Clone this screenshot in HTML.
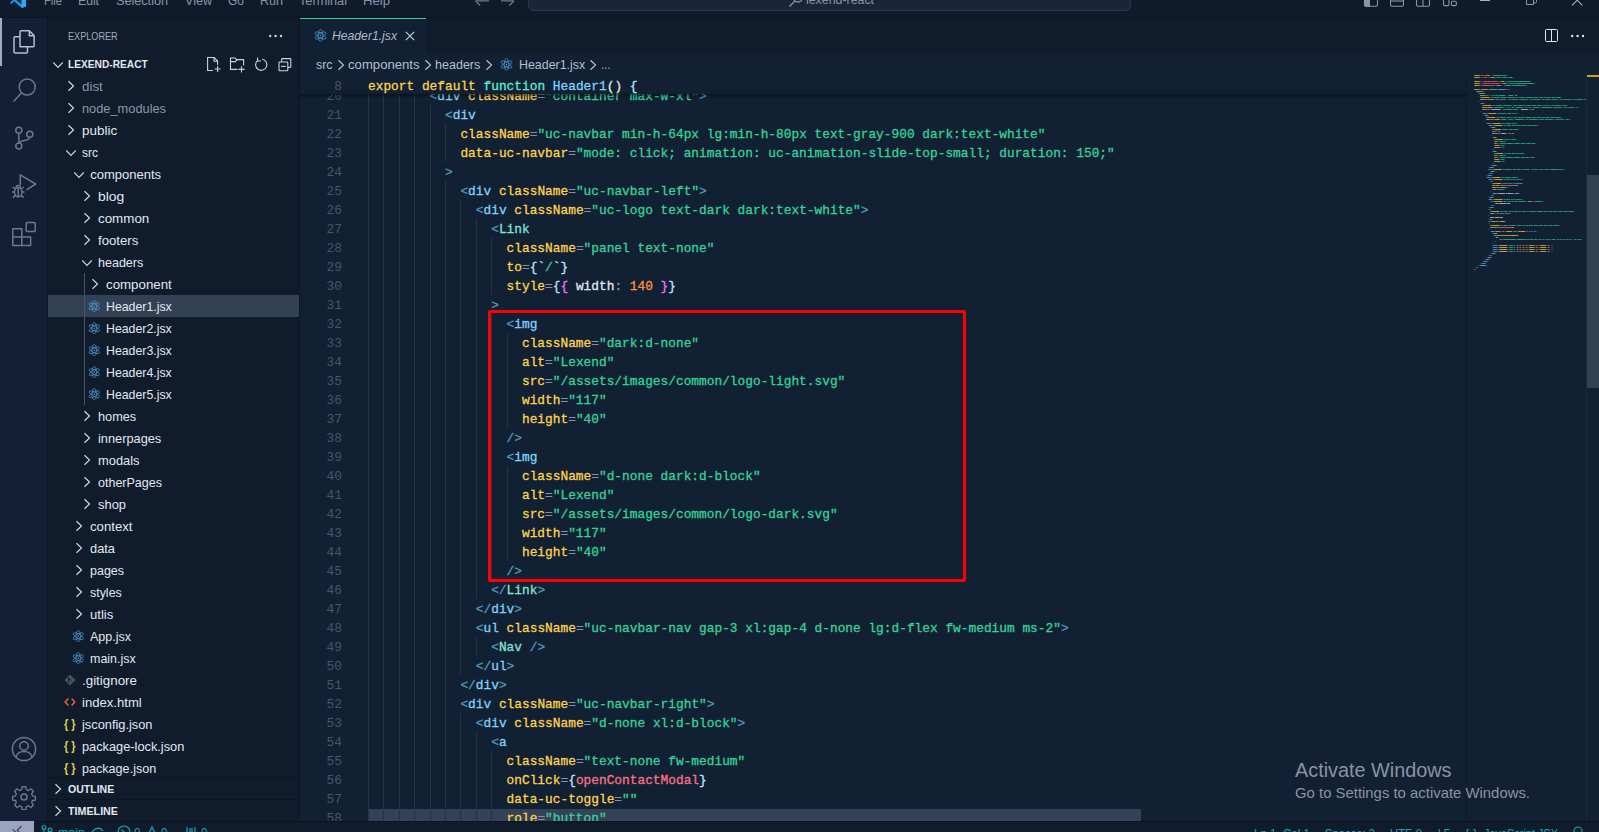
<!DOCTYPE html>
<html><head><meta charset="utf-8"><title>Header1.jsx - lexend-react</title>
<style>
*{box-sizing:border-box}
html,body{margin:0;padding:0}
body{width:1599px;height:832px;overflow:hidden;position:relative;background:#122033;font-family:"Liberation Sans",sans-serif;color:#e2e8f0}
.abs,.t,svg.i{position:absolute}
.t{white-space:pre;transform-origin:0 50%;display:block}
.code{position:absolute;left:368px;white-space:pre;font:12.83px/19px "Liberation Mono",monospace;height:19px;color:#e2e8f0;-webkit-text-stroke:.3px}
.ln{position:absolute;left:300px;width:42px;text-align:right;font:12.83px/19px "Liberation Mono",monospace;color:#475569;height:19px}
.mm{white-space:pre;font:bold 2.4px/2px "Liberation Mono",monospace;letter-spacing:-0.44px}
.g{position:absolute;width:1px;background:#243347}
.a{color:#fcd34d}.s{color:#34d399}.p{color:#4f9bb8}.tg{color:#7dd3fc}.cp{color:#84e1d4}.e{color:#8492a6}.b1{color:#bae6fd}.b2{color:#e879f9}.n{color:#fb923c}.v{color:#fb7185}.w{color:#e2e8f0}.k{color:#fcd34d}.f{color:#5eead4}
#root{position:absolute;left:0;top:0;width:1599px;height:832px;overflow:hidden;background:#122033}
html{overflow:hidden;width:1599px;height:832px}
</style></head><body><div id="root">

<div class="abs" style="left:0;top:0;width:1599px;height:18px;background:#0f1a2b;border-bottom:1px solid #0c1422"></div>
<svg class="i" style="left:0;top:0" width="40" height="12" viewBox="0 0 40 12"><path d="M10 2.6 L13 0 L16.2 0 L21.6 4.4 L21.6 0 L26 0 L26 6.2 L21.8 7.9 L14.3 1.2 L11.3 3.9 Z" fill="#1b9cf0"/><path d="M21.6 0 H26 V6.2 L21.8 7.9 Z" fill="#2aabf7"/></svg>
<span class="t" style="left:44px;top:-8.5px;font:normal 400 13px/18px 'Liberation Sans',sans-serif;color:#8a95a8;transform:scaleX(0.8591);">File</span>
<span class="t" style="left:78px;top:-8.5px;font:normal 400 13px/18px 'Liberation Sans',sans-serif;color:#8a95a8;transform:scaleX(0.9372);">Edit</span>
<span class="t" style="left:116px;top:-8.5px;font:normal 400 13px/18px 'Liberation Sans',sans-serif;color:#8a95a8;transform:scaleX(0.9722);">Selection</span>
<span class="t" style="left:185px;top:-8.5px;font:normal 400 13px/18px 'Liberation Sans',sans-serif;color:#8a95a8;transform:scaleX(0.9659);">View</span>
<span class="t" style="left:228px;top:-8.5px;font:normal 400 13px/18px 'Liberation Sans',sans-serif;color:#8a95a8;transform:scaleX(0.9225);">Go</span>
<span class="t" style="left:260px;top:-8.5px;font:normal 400 13px/18px 'Liberation Sans',sans-serif;color:#8a95a8;transform:scaleX(0.9640);">Run</span>
<span class="t" style="left:299px;top:-8.5px;font:normal 400 13px/18px 'Liberation Sans',sans-serif;color:#8a95a8;transform:scaleX(0.9771);">Terminal</span>
<span class="t" style="left:363px;top:-8.5px;font:normal 400 13px/18px 'Liberation Sans',sans-serif;color:#8a95a8;transform:scaleX(1.0093);">Help</span>
<svg class="i" style="left:470px;top:0" width="50" height="8" viewBox="0 0 50 8" fill="none" stroke="#6f7b8e" stroke-width="1.2"><path d="M5.5 .8 H19 M5.5 .8 L10.2 5.5"/><path d="M44 .8 H31 M44 .8 L39.3 5.5"/></svg>
<div class="abs" style="left:528px;top:-13px;width:603px;height:24px;background:#1a2638;border:1px solid #2c394c;border-radius:6px"></div>
<svg class="i" style="left:788px;top:-7px" width="16" height="16" viewBox="0 0 16 16" fill="none" stroke="#8a95a8" stroke-width="1.3"><path d="M1.5 13.5 L7 8"/><circle cx="10" cy="4.6" r="4.4"/></svg>
<span class="t" style="left:806px;top:-8px;font:normal 400 12px/17px 'Liberation Sans',sans-serif;color:#8a95a8;transform:scaleX(1.0296);">lexend-react</span>
<svg class="i" style="left:1360px;top:0" width="100" height="9" viewBox="0 0 100 9" fill="none" stroke="#8a95a8" stroke-width="1.1"><rect x="4.5" y="-8" width="13" height="14.3" rx="1.5"/><path d="M4.5 -2 H9.5 V6.3 H6 a1.5 1.5 0 0 1 -1.5 -1.5Z" fill="#8a95a8"/><rect x="30.5" y="-8" width="13" height="14.3" rx="1.5"/><path d="M30.5 1 H43.5"/><rect x="56.5" y="-8" width="13" height="14.3" rx="1.5"/><path d="M63 -2 V6.3"/><rect x="83.5" y="-8" width="5.5" height="13.6" rx="1"/><rect x="91.5" y="1.2" width="4.8" height="4.4" rx="1"/></svg>
<div class="abs" style="left:1480px;top:0;width:10px;height:1px;background:#aab3c2"></div>
<svg class="i" style="left:1520px;top:0" width="20" height="8" viewBox="0 0 20 8" fill="none" stroke="#8a95a8" stroke-width="1"><path d="M6.5 -2 V4.5 H13.5 V-2"/><path d="M13.5 2.8 H15.5 a1 1 0 0 0 1 -1 V-2"/></svg>
<svg class="i" style="left:1568px;top:0" width="20" height="8" viewBox="0 0 20 8" fill="none" stroke="#aab3c2" stroke-width="1.1"><path d="M4 5.3 L9.2 .2 L14.4 5.3"/></svg>
<div class="abs" style="left:0;top:18px;width:48px;height:803px;background:#121f34;border-right:1px solid #0d1626"></div>
<div class="abs" style="left:0;top:18px;width:2px;height:48px;background:#a5abc4"></div>
<svg class="i" style="left:0;top:18px" width="48" height="48" viewBox="0 18 48 48" fill="none" stroke="#b6bbd2" stroke-width="1.5" stroke-linejoin="round"><path d="M20 46.7 V31.8 a1 1 0 0 1 1 -1 H29.3 L34.1 35.6 V45.7 a1 1 0 0 1 -1 1 Z"/><path d="M29.3 31 V35.7 H34"/><path d="M19.8 36.8 H15 a1 1 0 0 0 -1 1 V52 a1 1 0 0 0 1 1 H26.5 a1 1 0 0 0 1 -1 V47"/></svg>
<svg class="i" style="left:12px;top:76px" width="26" height="28" viewBox="0 0 26 28" fill="none" stroke="#6c788c" stroke-width="1.5"><circle cx="15.2" cy="11" r="8"/><path d="M9.6 16.8 L1.6 25.4"/></svg>
<svg class="i" style="left:12px;top:124px" width="24" height="28" viewBox="0 0 24 28" fill="none" stroke="#6c788c" stroke-width="1.5"><circle cx="6.8" cy="6.3" r="3"/><circle cx="6.8" cy="22" r="3"/><circle cx="17.8" cy="10.3" r="3"/><path d="M6.8 9.3 V19 M17.8 13.3 C17.8 17.5 8.5 15.5 7 19"/></svg>
<svg class="i" style="left:11px;top:172px" width="27" height="28" viewBox="0 0 27 28" fill="none" stroke="#6c788c" stroke-width="1.5" stroke-linejoin="round"><path d="M9.3 13 V2.8 L24.6 12 L15.5 17.8"/><ellipse cx="7.2" cy="20.2" rx="3.7" ry="4.6"/><path d="M7.2 16 V24.5 M3.5 20 H1 M11 20 H13.5 M4.2 17 L1.8 15 M10.2 17 L12.6 15 M4.2 23.4 L1.8 25.6 M10.2 23.4 L12.6 25.6 M5 15.8 a2.2 2.2 0 0 1 4.4 0"/></svg>
<svg class="i" style="left:11px;top:221px" width="26" height="26" viewBox="0 0 26 26" fill="none" stroke="#6c788c" stroke-width="1.5" stroke-linejoin="round"><path d="M1.8 7.8 H10.8 V24.4 H1.8 Z M10.8 16 H19.6 V24.4 H10.8 M1.8 16 H10.8"/><rect x="15.2" y="1.6" width="9" height="9" rx="1"/></svg>
<svg class="i" style="left:11px;top:736px" width="26" height="26" viewBox="0 0 26 26" fill="none" stroke="#6c788c" stroke-width="1.5"><circle cx="13" cy="13" r="11.6"/><circle cx="13" cy="10" r="4.3"/><path d="M5 21.5 C6 16.5 10 15.6 13 15.6 C16 15.6 20 16.5 21 21.5"/></svg>
<svg class="i" style="left:11px;top:784px" width="26" height="26" viewBox="0 0 26 26" fill="none" stroke="#6c788c" stroke-width="1.5" stroke-linejoin="round"><circle cx="13" cy="13" r="3"/><path d="M11 1.6 h4 l.6 3.3 2.2 .9 2.8 -1.9 2.8 2.8 -1.9 2.8 .9 2.2 3.3 .6 v4 l-3.3 .6 -.9 2.2 1.9 2.8 -2.8 2.8 -2.8 -1.9 -2.2 .9 -.6 3.3 h-4 l-.6 -3.3 -2.2 -.9 -2.8 1.9 -2.8 -2.8 1.9 -2.8 -.9 -2.2 -3.3 -.6 v-4 l3.3 -.6 .9 -2.2 -1.9 -2.8 2.8 -2.8 2.8 1.9 2.2 -.9z" transform="translate(1.3 1.3) scale(0.9)"/></svg>
<div class="abs" style="left:48px;top:18px;width:252px;height:803px;background:#101b2b;border-right:1px solid #0d1626"></div>
<span class="t" style="left:68px;top:28.5px;font:normal 400 11px/15px 'Liberation Sans',sans-serif;color:#a3adbd;transform:scaleX(0.8294);">EXPLORER</span>
<svg class="i" style="left:268px;top:34px" width="16" height="4" viewBox="0 0 16 4" fill="#cbd5e1"><circle cx="2.2" cy="2" r="1.2"/><circle cx="7.6" cy="2" r="1.2"/><circle cx="13" cy="2" r="1.2"/></svg>
<svg class="i" style="left:52px;top:60.5px" width="12" height="8" viewBox="0 0 12 8" fill="none" stroke="#cbd5e1" stroke-width="1.2"><path d="M1.3 1.5 L6 6.4 L10.7 1.5"/></svg>
<span class="t" style="left:67.8px;top:56.5px;font:normal 700 11px/15px 'Liberation Sans',sans-serif;color:#e2e8f0;transform:scaleX(0.9249);">LEXEND-REACT</span>
<svg class="i" style="left:206px;top:56px" width="16" height="17" viewBox="0 0 16 17" fill="none" stroke="#cbd5e1" stroke-width="1.1"><path d="M7 14.5 H1.6 V1.5 H8.2 L11.6 5 V9"/><path d="M8 1.6 V5.2 H11.5"/><path d="M8.6 13 H14.6 M11.6 10 V16"/></svg>
<svg class="i" style="left:229px;top:56px" width="17" height="17" viewBox="0 0 17 17" fill="none" stroke="#cbd5e1" stroke-width="1.1"><path d="M8.5 13.4 H1.5 V2 H6.2 L7.6 3.6 H14.6 V9.4"/><path d="M1.5 5.6 H6.4 L7.8 3.8"/><path d="M9.4 13.4 H15.6 M12.5 10.3 V16.5"/></svg>
<svg class="i" style="left:254px;top:57px" width="14" height="15" viewBox="0 0 14 15" fill="none" stroke="#cbd5e1" stroke-width="1.1"><path d="M3.4 3.6 A5.6 5.6 0 1 0 8.2 2.2"/><path d="M3.6 0.6 V4 H7"/></svg>
<svg class="i" style="left:278px;top:58px" width="14" height="14" viewBox="0 0 14 14" fill="none" stroke="#cbd5e1" stroke-width="1.1"><path d="M3.6 3.8 V1.4 a.8 .8 0 0 1 .8 -.8 H12 a.8 .8 0 0 1 .8 .8 V8.6 a.8 .8 0 0 1 -.8 .8 H10"/><rect x="1" y="4" width="8.8" height="8.8" rx=".8"/><path d="M3 8.4 H7.8"/></svg>
<svg class="i" style="left:67px;top:80px" width="8" height="12" viewBox="0 0 8 12" fill="none" stroke="#cbd5e1" stroke-width="1.2"><path d="M1.5 1.3 L6.5 6 L1.5 10.7"/></svg>
<span class="t" style="left:82px;top:78px;font:normal 400 13px/18px 'Liberation Sans',sans-serif;color:#8b97a9;transform:scaleX(1.0280);">dist</span>
<svg class="i" style="left:67px;top:102px" width="8" height="12" viewBox="0 0 8 12" fill="none" stroke="#cbd5e1" stroke-width="1.2"><path d="M1.5 1.3 L6.5 6 L1.5 10.7"/></svg>
<span class="t" style="left:82px;top:100px;font:normal 400 13px/18px 'Liberation Sans',sans-serif;color:#8b97a9;transform:scaleX(0.9848);">node_modules</span>
<svg class="i" style="left:67px;top:124px" width="8" height="12" viewBox="0 0 8 12" fill="none" stroke="#cbd5e1" stroke-width="1.2"><path d="M1.5 1.3 L6.5 6 L1.5 10.7"/></svg>
<span class="t" style="left:82px;top:122px;font:normal 400 13px/18px 'Liberation Sans',sans-serif;color:#e2e8f0;transform:scaleX(1.0333);">public</span>
<svg class="i" style="left:64.5px;top:148.5px" width="12" height="8" viewBox="0 0 12 8" fill="none" stroke="#cbd5e1" stroke-width="1.2"><path d="M1.3 1.5 L6 6.4 L10.7 1.5"/></svg>
<span class="t" style="left:82px;top:144px;font:normal 400 13px/18px 'Liberation Sans',sans-serif;color:#e2e8f0;transform:scaleX(0.9225);">src</span>
<svg class="i" style="left:72.8px;top:170.5px" width="12" height="8" viewBox="0 0 12 8" fill="none" stroke="#cbd5e1" stroke-width="1.2"><path d="M1.3 1.5 L6 6.4 L10.7 1.5"/></svg>
<span class="t" style="left:90.3px;top:166px;font:normal 400 13px/18px 'Liberation Sans',sans-serif;color:#e2e8f0;">components</span>
<svg class="i" style="left:83px;top:190px" width="8" height="12" viewBox="0 0 8 12" fill="none" stroke="#cbd5e1" stroke-width="1.2"><path d="M1.5 1.3 L6.5 6 L1.5 10.7"/></svg>
<span class="t" style="left:98px;top:188px;font:normal 400 13px/18px 'Liberation Sans',sans-serif;color:#e2e8f0;transform:scaleX(1.0680);">blog</span>
<svg class="i" style="left:83px;top:212px" width="8" height="12" viewBox="0 0 8 12" fill="none" stroke="#cbd5e1" stroke-width="1.2"><path d="M1.5 1.3 L6.5 6 L1.5 10.7"/></svg>
<span class="t" style="left:98px;top:210px;font:normal 400 13px/18px 'Liberation Sans',sans-serif;color:#e2e8f0;transform:scaleX(1.0279);">common</span>
<svg class="i" style="left:83px;top:234px" width="8" height="12" viewBox="0 0 8 12" fill="none" stroke="#cbd5e1" stroke-width="1.2"><path d="M1.5 1.3 L6.5 6 L1.5 10.7"/></svg>
<span class="t" style="left:98px;top:232px;font:normal 400 13px/18px 'Liberation Sans',sans-serif;color:#e2e8f0;transform:scaleX(1.0126);">footers</span>
<svg class="i" style="left:80.5px;top:258.5px" width="12" height="8" viewBox="0 0 12 8" fill="none" stroke="#cbd5e1" stroke-width="1.2"><path d="M1.3 1.5 L6 6.4 L10.7 1.5"/></svg>
<span class="t" style="left:98px;top:254px;font:normal 400 13px/18px 'Liberation Sans',sans-serif;color:#e2e8f0;transform:scaleX(0.9631);">headers</span>
<svg class="i" style="left:91.25px;top:278px" width="8" height="12" viewBox="0 0 8 12" fill="none" stroke="#cbd5e1" stroke-width="1.2"><path d="M1.5 1.3 L6.5 6 L1.5 10.7"/></svg>
<span class="t" style="left:106.25px;top:276px;font:normal 400 13px/18px 'Liberation Sans',sans-serif;color:#e2e8f0;transform:scaleX(1.0221);">component</span>
<div class="abs" style="left:48px;top:295px;width:251px;height:22px;background:#334155"></div>
<svg class="i" style="left:88px;top:299.75px" width="12.5" height="12.5" viewBox="-10 -10 20 20" fill="none" stroke="#4da3dc" stroke-width="1.05"><ellipse rx="3.5" ry="9.2"/><ellipse rx="9.2" ry="3.5" transform="rotate(30)"/><ellipse rx="9.2" ry="3.5" transform="rotate(-30)"/><circle r="1.2" fill="#4da3dc" stroke="none"/></svg>
<span class="t" style="left:106.25px;top:298px;font:normal 400 13px/18px 'Liberation Sans',sans-serif;color:#e2e8f0;transform:scaleX(0.9477);">Header1.jsx</span>
<svg class="i" style="left:88px;top:321.75px" width="12.5" height="12.5" viewBox="-10 -10 20 20" fill="none" stroke="#4da3dc" stroke-width="1.05"><ellipse rx="3.5" ry="9.2"/><ellipse rx="9.2" ry="3.5" transform="rotate(30)"/><ellipse rx="9.2" ry="3.5" transform="rotate(-30)"/><circle r="1.2" fill="#4da3dc" stroke="none"/></svg>
<span class="t" style="left:106.25px;top:320px;font:normal 400 13px/18px 'Liberation Sans',sans-serif;color:#e2e8f0;transform:scaleX(0.9477);">Header2.jsx</span>
<svg class="i" style="left:88px;top:343.75px" width="12.5" height="12.5" viewBox="-10 -10 20 20" fill="none" stroke="#4da3dc" stroke-width="1.05"><ellipse rx="3.5" ry="9.2"/><ellipse rx="9.2" ry="3.5" transform="rotate(30)"/><ellipse rx="9.2" ry="3.5" transform="rotate(-30)"/><circle r="1.2" fill="#4da3dc" stroke="none"/></svg>
<span class="t" style="left:106.25px;top:342px;font:normal 400 13px/18px 'Liberation Sans',sans-serif;color:#e2e8f0;transform:scaleX(0.9477);">Header3.jsx</span>
<svg class="i" style="left:88px;top:365.75px" width="12.5" height="12.5" viewBox="-10 -10 20 20" fill="none" stroke="#4da3dc" stroke-width="1.05"><ellipse rx="3.5" ry="9.2"/><ellipse rx="9.2" ry="3.5" transform="rotate(30)"/><ellipse rx="9.2" ry="3.5" transform="rotate(-30)"/><circle r="1.2" fill="#4da3dc" stroke="none"/></svg>
<span class="t" style="left:106.25px;top:364px;font:normal 400 13px/18px 'Liberation Sans',sans-serif;color:#e2e8f0;transform:scaleX(0.9477);">Header4.jsx</span>
<svg class="i" style="left:88px;top:387.75px" width="12.5" height="12.5" viewBox="-10 -10 20 20" fill="none" stroke="#4da3dc" stroke-width="1.05"><ellipse rx="3.5" ry="9.2"/><ellipse rx="9.2" ry="3.5" transform="rotate(30)"/><ellipse rx="9.2" ry="3.5" transform="rotate(-30)"/><circle r="1.2" fill="#4da3dc" stroke="none"/></svg>
<span class="t" style="left:106.25px;top:386px;font:normal 400 13px/18px 'Liberation Sans',sans-serif;color:#e2e8f0;transform:scaleX(0.9477);">Header5.jsx</span>
<svg class="i" style="left:83px;top:410px" width="8" height="12" viewBox="0 0 8 12" fill="none" stroke="#cbd5e1" stroke-width="1.2"><path d="M1.5 1.3 L6.5 6 L1.5 10.7"/></svg>
<span class="t" style="left:98px;top:408px;font:normal 400 13px/18px 'Liberation Sans',sans-serif;color:#e2e8f0;transform:scaleX(0.9800);">homes</span>
<svg class="i" style="left:83px;top:432px" width="8" height="12" viewBox="0 0 8 12" fill="none" stroke="#cbd5e1" stroke-width="1.2"><path d="M1.5 1.3 L6.5 6 L1.5 10.7"/></svg>
<span class="t" style="left:98px;top:430px;font:normal 400 13px/18px 'Liberation Sans',sans-serif;color:#e2e8f0;transform:scaleX(0.9832);">innerpages</span>
<svg class="i" style="left:83px;top:454px" width="8" height="12" viewBox="0 0 8 12" fill="none" stroke="#cbd5e1" stroke-width="1.2"><path d="M1.5 1.3 L6.5 6 L1.5 10.7"/></svg>
<span class="t" style="left:98px;top:452px;font:normal 400 13px/18px 'Liberation Sans',sans-serif;color:#e2e8f0;transform:scaleX(0.9899);">modals</span>
<svg class="i" style="left:83px;top:476px" width="8" height="12" viewBox="0 0 8 12" fill="none" stroke="#cbd5e1" stroke-width="1.2"><path d="M1.5 1.3 L6.5 6 L1.5 10.7"/></svg>
<span class="t" style="left:98px;top:474px;font:normal 400 13px/18px 'Liberation Sans',sans-serif;color:#e2e8f0;transform:scaleX(0.9624);">otherPages</span>
<svg class="i" style="left:83px;top:498px" width="8" height="12" viewBox="0 0 8 12" fill="none" stroke="#cbd5e1" stroke-width="1.2"><path d="M1.5 1.3 L6.5 6 L1.5 10.7"/></svg>
<span class="t" style="left:98px;top:496px;font:normal 400 13px/18px 'Liberation Sans',sans-serif;color:#e2e8f0;transform:scaleX(0.9928);">shop</span>
<svg class="i" style="left:75px;top:520px" width="8" height="12" viewBox="0 0 8 12" fill="none" stroke="#cbd5e1" stroke-width="1.2"><path d="M1.5 1.3 L6.5 6 L1.5 10.7"/></svg>
<span class="t" style="left:90px;top:518px;font:normal 400 13px/18px 'Liberation Sans',sans-serif;color:#e2e8f0;transform:scaleX(1.0138);">context</span>
<svg class="i" style="left:75px;top:542px" width="8" height="12" viewBox="0 0 8 12" fill="none" stroke="#cbd5e1" stroke-width="1.2"><path d="M1.5 1.3 L6.5 6 L1.5 10.7"/></svg>
<span class="t" style="left:90px;top:540px;font:normal 400 13px/18px 'Liberation Sans',sans-serif;color:#e2e8f0;transform:scaleX(0.9877);">data</span>
<svg class="i" style="left:75px;top:564px" width="8" height="12" viewBox="0 0 8 12" fill="none" stroke="#cbd5e1" stroke-width="1.2"><path d="M1.5 1.3 L6.5 6 L1.5 10.7"/></svg>
<span class="t" style="left:90px;top:562px;font:normal 400 13px/18px 'Liberation Sans',sans-serif;color:#e2e8f0;transform:scaleX(0.9599);">pages</span>
<svg class="i" style="left:75px;top:586px" width="8" height="12" viewBox="0 0 8 12" fill="none" stroke="#cbd5e1" stroke-width="1.2"><path d="M1.5 1.3 L6.5 6 L1.5 10.7"/></svg>
<span class="t" style="left:90px;top:584px;font:normal 400 13px/18px 'Liberation Sans',sans-serif;color:#e2e8f0;transform:scaleX(0.9553);">styles</span>
<svg class="i" style="left:75px;top:608px" width="8" height="12" viewBox="0 0 8 12" fill="none" stroke="#cbd5e1" stroke-width="1.2"><path d="M1.5 1.3 L6.5 6 L1.5 10.7"/></svg>
<span class="t" style="left:90px;top:606px;font:normal 400 13px/18px 'Liberation Sans',sans-serif;color:#e2e8f0;transform:scaleX(1.0076);">utlis</span>
<svg class="i" style="left:71.75px;top:629.75px" width="12.5" height="12.5" viewBox="-10 -10 20 20" fill="none" stroke="#4da3dc" stroke-width="1.05"><ellipse rx="3.5" ry="9.2"/><ellipse rx="9.2" ry="3.5" transform="rotate(30)"/><ellipse rx="9.2" ry="3.5" transform="rotate(-30)"/><circle r="1.2" fill="#4da3dc" stroke="none"/></svg>
<span class="t" style="left:90px;top:628px;font:normal 400 13px/18px 'Liberation Sans',sans-serif;color:#e2e8f0;transform:scaleX(0.9615);">App.jsx</span>
<svg class="i" style="left:71.75px;top:651.75px" width="12.5" height="12.5" viewBox="-10 -10 20 20" fill="none" stroke="#4da3dc" stroke-width="1.05"><ellipse rx="3.5" ry="9.2"/><ellipse rx="9.2" ry="3.5" transform="rotate(30)"/><ellipse rx="9.2" ry="3.5" transform="rotate(-30)"/><circle r="1.2" fill="#4da3dc" stroke="none"/></svg>
<span class="t" style="left:90px;top:650px;font:normal 400 13px/18px 'Liberation Sans',sans-serif;color:#e2e8f0;transform:scaleX(0.9594);">main.jsx</span>
<svg class="i" style="left:64px;top:674px" width="12" height="12" viewBox="0 0 12 12"><path d="M6 .4 L11.6 6 L6 11.6 L.4 6Z" fill="#46525f"/><path d="M4.6 3.4 V8.6 M4.6 4.6 L7.6 6.6" stroke="#101b2d" stroke-width="1" fill="none"/></svg>
<span class="t" style="left:82px;top:672px;font:normal 400 13px/18px 'Liberation Sans',sans-serif;color:#e2e8f0;transform:scaleX(1.0283);">.gitignore</span>
<svg class="i" style="left:64px;top:697px" width="12" height="10" viewBox="0 0 12 10" fill="none" stroke="#e8642c" stroke-width="1.5"><path d="M4.4 1.4 L1.2 5 L4.4 8.6 M7.6 1.4 L10.8 5 L7.6 8.6"/></svg>
<span class="t" style="left:82px;top:694px;font:normal 400 13px/18px 'Liberation Sans',sans-serif;color:#e2e8f0;transform:scaleX(1.0084);">index.html</span>
<span class="t" style="left:64px;top:715.5px;font:normal 700 12px/17px 'Liberation Sans',sans-serif;color:#e6d04b;transform:scaleX(0.9064);">{ }</span>
<span class="t" style="left:82px;top:716px;font:normal 400 13px/18px 'Liberation Sans',sans-serif;color:#e2e8f0;transform:scaleX(0.9854);">jsconfig.json</span>
<span class="t" style="left:64px;top:737.5px;font:normal 700 12px/17px 'Liberation Sans',sans-serif;color:#e6d04b;transform:scaleX(0.9064);">{ }</span>
<span class="t" style="left:82px;top:738px;font:normal 400 13px/18px 'Liberation Sans',sans-serif;color:#e2e8f0;transform:scaleX(0.9826);">package-lock.json</span>
<span class="t" style="left:64px;top:759.5px;font:normal 700 12px/17px 'Liberation Sans',sans-serif;color:#e6d04b;transform:scaleX(0.9064);">{ }</span>
<span class="t" style="left:82px;top:760px;font:normal 400 13px/18px 'Liberation Sans',sans-serif;color:#e2e8f0;transform:scaleX(0.9690);">package.json</span>
<div class="abs" style="left:84px;top:273px;width:1px;height:132px;background:#46546a"></div>
<div class="abs" style="left:48px;top:777px;width:251px;height:1px;background:#0c1421"></div>
<svg class="i" style="left:54px;top:783px" width="8" height="12" viewBox="0 0 8 12" fill="none" stroke="#cbd5e1" stroke-width="1.2"><path d="M1.5 1.3 L6.5 6 L1.5 10.7"/></svg>
<span class="t" style="left:68px;top:782px;font:normal 700 11px/15px 'Liberation Sans',sans-serif;color:#e2e8f0;transform:scaleX(0.9579);">OUTLINE</span>
<div class="abs" style="left:48px;top:799px;width:251px;height:1px;background:#0c1421"></div>
<svg class="i" style="left:54px;top:805px" width="8" height="12" viewBox="0 0 8 12" fill="none" stroke="#cbd5e1" stroke-width="1.2"><path d="M1.5 1.3 L6.5 6 L1.5 10.7"/></svg>
<span class="t" style="left:68px;top:804px;font:normal 700 11px/15px 'Liberation Sans',sans-serif;color:#e2e8f0;transform:scaleX(0.9738);">TIMELINE</span>
<div class="abs" style="left:300px;top:18px;width:1299px;height:35px;background:#101b2b"></div>
<div class="abs" style="left:300px;top:18px;width:126px;height:35px;background:#122033;border-top:1px solid #34d399"></div>
<svg class="i" style="left:314px;top:29px" width="13" height="13" viewBox="-10 -10 20 20" fill="none" stroke="#4da3dc" stroke-width="1.05"><ellipse rx="3.5" ry="9.2"/><ellipse rx="9.2" ry="3.5" transform="rotate(30)"/><ellipse rx="9.2" ry="3.5" transform="rotate(-30)"/><circle r="1.2" fill="#4da3dc" stroke="none"/></svg>
<span class="t" style="left:332px;top:27px;font:italic 400 13px/18px 'Liberation Sans',sans-serif;color:#aeb8cc;transform:scaleX(0.9369);">Header1.jsx</span>
<svg class="i" style="left:405px;top:31px" width="10" height="10" viewBox="0 0 10 10" stroke="#cbd5e1" stroke-width="1.1"><path d="M.8 .8 L9.2 9.2 M9.2 .8 L.8 9.2"/></svg>
<svg class="i" style="left:1544px;top:28px" width="15" height="15" viewBox="0 0 15 15" fill="none" stroke="#e2e8f0" stroke-width="1"><rect x="1.5" y="1.5" width="12" height="12" rx="1"/><path d="M7.5 1.5 V13.5"/></svg>
<svg class="i" style="left:1570px;top:34px" width="16" height="4" viewBox="0 0 16 4" fill="#e2e8f0"><circle cx="2.2" cy="2" r="1.2"/><circle cx="7.6" cy="2" r="1.2"/><circle cx="13" cy="2" r="1.2"/></svg>
<div class="abs" style="left:368px;top:809px;width:773px;height:12px;background:#344156"></div>
<div class="g" style="left:368.0px;top:86px;height:19px"></div>
<div class="g" style="left:383.4px;top:86px;height:19px"></div>
<div class="g" style="left:398.8px;top:86px;height:19px"></div>
<div class="g" style="left:414.2px;top:86px;height:19px"></div>
<div class="g" style="left:368.0px;top:105px;height:19px"></div>
<div class="g" style="left:383.4px;top:105px;height:19px"></div>
<div class="g" style="left:398.8px;top:105px;height:19px"></div>
<div class="g" style="left:414.2px;top:105px;height:19px"></div>
<div class="g" style="left:429.6px;top:105px;height:19px"></div>
<div class="g" style="left:368.0px;top:124px;height:19px"></div>
<div class="g" style="left:383.4px;top:124px;height:19px"></div>
<div class="g" style="left:398.8px;top:124px;height:19px"></div>
<div class="g" style="left:414.2px;top:124px;height:19px"></div>
<div class="g" style="left:429.6px;top:124px;height:19px"></div>
<div class="g" style="left:445.0px;top:124px;height:19px"></div>
<div class="g" style="left:368.0px;top:143px;height:19px"></div>
<div class="g" style="left:383.4px;top:143px;height:19px"></div>
<div class="g" style="left:398.8px;top:143px;height:19px"></div>
<div class="g" style="left:414.2px;top:143px;height:19px"></div>
<div class="g" style="left:429.6px;top:143px;height:19px"></div>
<div class="g" style="left:445.0px;top:143px;height:19px"></div>
<div class="g" style="left:368.0px;top:162px;height:19px"></div>
<div class="g" style="left:383.4px;top:162px;height:19px"></div>
<div class="g" style="left:398.8px;top:162px;height:19px"></div>
<div class="g" style="left:414.2px;top:162px;height:19px"></div>
<div class="g" style="left:429.6px;top:162px;height:19px"></div>
<div class="g" style="left:368.0px;top:181px;height:19px"></div>
<div class="g" style="left:383.4px;top:181px;height:19px"></div>
<div class="g" style="left:398.8px;top:181px;height:19px"></div>
<div class="g" style="left:414.2px;top:181px;height:19px"></div>
<div class="g" style="left:429.6px;top:181px;height:19px"></div>
<div class="g" style="left:445.0px;top:181px;height:19px"></div>
<div class="g" style="left:368.0px;top:200px;height:19px"></div>
<div class="g" style="left:383.4px;top:200px;height:19px"></div>
<div class="g" style="left:398.8px;top:200px;height:19px"></div>
<div class="g" style="left:414.2px;top:200px;height:19px"></div>
<div class="g" style="left:429.6px;top:200px;height:19px"></div>
<div class="g" style="left:445.0px;top:200px;height:19px"></div>
<div class="g" style="left:460.4px;top:200px;height:19px"></div>
<div class="g" style="left:368.0px;top:219px;height:19px"></div>
<div class="g" style="left:383.4px;top:219px;height:19px"></div>
<div class="g" style="left:398.8px;top:219px;height:19px"></div>
<div class="g" style="left:414.2px;top:219px;height:19px"></div>
<div class="g" style="left:429.6px;top:219px;height:19px"></div>
<div class="g" style="left:445.0px;top:219px;height:19px"></div>
<div class="g" style="left:460.4px;top:219px;height:19px"></div>
<div class="g" style="left:475.8px;top:219px;height:19px"></div>
<div class="g" style="left:368.0px;top:238px;height:19px"></div>
<div class="g" style="left:383.4px;top:238px;height:19px"></div>
<div class="g" style="left:398.8px;top:238px;height:19px"></div>
<div class="g" style="left:414.2px;top:238px;height:19px"></div>
<div class="g" style="left:429.6px;top:238px;height:19px"></div>
<div class="g" style="left:445.0px;top:238px;height:19px"></div>
<div class="g" style="left:460.4px;top:238px;height:19px"></div>
<div class="g" style="left:475.8px;top:238px;height:19px"></div>
<div class="g" style="left:491.2px;top:238px;height:19px"></div>
<div class="g" style="left:368.0px;top:257px;height:19px"></div>
<div class="g" style="left:383.4px;top:257px;height:19px"></div>
<div class="g" style="left:398.8px;top:257px;height:19px"></div>
<div class="g" style="left:414.2px;top:257px;height:19px"></div>
<div class="g" style="left:429.6px;top:257px;height:19px"></div>
<div class="g" style="left:445.0px;top:257px;height:19px"></div>
<div class="g" style="left:460.4px;top:257px;height:19px"></div>
<div class="g" style="left:475.8px;top:257px;height:19px"></div>
<div class="g" style="left:491.2px;top:257px;height:19px"></div>
<div class="g" style="left:368.0px;top:276px;height:19px"></div>
<div class="g" style="left:383.4px;top:276px;height:19px"></div>
<div class="g" style="left:398.8px;top:276px;height:19px"></div>
<div class="g" style="left:414.2px;top:276px;height:19px"></div>
<div class="g" style="left:429.6px;top:276px;height:19px"></div>
<div class="g" style="left:445.0px;top:276px;height:19px"></div>
<div class="g" style="left:460.4px;top:276px;height:19px"></div>
<div class="g" style="left:475.8px;top:276px;height:19px"></div>
<div class="g" style="left:491.2px;top:276px;height:19px"></div>
<div class="g" style="left:368.0px;top:295px;height:19px"></div>
<div class="g" style="left:383.4px;top:295px;height:19px"></div>
<div class="g" style="left:398.8px;top:295px;height:19px"></div>
<div class="g" style="left:414.2px;top:295px;height:19px"></div>
<div class="g" style="left:429.6px;top:295px;height:19px"></div>
<div class="g" style="left:445.0px;top:295px;height:19px"></div>
<div class="g" style="left:460.4px;top:295px;height:19px"></div>
<div class="g" style="left:475.8px;top:295px;height:19px"></div>
<div class="g" style="left:368.0px;top:314px;height:19px"></div>
<div class="g" style="left:383.4px;top:314px;height:19px"></div>
<div class="g" style="left:398.8px;top:314px;height:19px"></div>
<div class="g" style="left:414.2px;top:314px;height:19px"></div>
<div class="g" style="left:429.6px;top:314px;height:19px"></div>
<div class="g" style="left:445.0px;top:314px;height:19px"></div>
<div class="g" style="left:460.4px;top:314px;height:19px"></div>
<div class="g" style="left:475.8px;top:314px;height:19px"></div>
<div class="g" style="left:491.2px;top:314px;height:19px"></div>
<div class="g" style="left:368.0px;top:333px;height:19px"></div>
<div class="g" style="left:383.4px;top:333px;height:19px"></div>
<div class="g" style="left:398.8px;top:333px;height:19px"></div>
<div class="g" style="left:414.2px;top:333px;height:19px"></div>
<div class="g" style="left:429.6px;top:333px;height:19px"></div>
<div class="g" style="left:445.0px;top:333px;height:19px"></div>
<div class="g" style="left:460.4px;top:333px;height:19px"></div>
<div class="g" style="left:475.8px;top:333px;height:19px"></div>
<div class="g" style="left:491.2px;top:333px;height:19px"></div>
<div class="g" style="left:506.6px;top:333px;height:19px"></div>
<div class="g" style="left:368.0px;top:352px;height:19px"></div>
<div class="g" style="left:383.4px;top:352px;height:19px"></div>
<div class="g" style="left:398.8px;top:352px;height:19px"></div>
<div class="g" style="left:414.2px;top:352px;height:19px"></div>
<div class="g" style="left:429.6px;top:352px;height:19px"></div>
<div class="g" style="left:445.0px;top:352px;height:19px"></div>
<div class="g" style="left:460.4px;top:352px;height:19px"></div>
<div class="g" style="left:475.8px;top:352px;height:19px"></div>
<div class="g" style="left:491.2px;top:352px;height:19px"></div>
<div class="g" style="left:506.6px;top:352px;height:19px"></div>
<div class="g" style="left:368.0px;top:371px;height:19px"></div>
<div class="g" style="left:383.4px;top:371px;height:19px"></div>
<div class="g" style="left:398.8px;top:371px;height:19px"></div>
<div class="g" style="left:414.2px;top:371px;height:19px"></div>
<div class="g" style="left:429.6px;top:371px;height:19px"></div>
<div class="g" style="left:445.0px;top:371px;height:19px"></div>
<div class="g" style="left:460.4px;top:371px;height:19px"></div>
<div class="g" style="left:475.8px;top:371px;height:19px"></div>
<div class="g" style="left:491.2px;top:371px;height:19px"></div>
<div class="g" style="left:506.6px;top:371px;height:19px"></div>
<div class="g" style="left:368.0px;top:390px;height:19px"></div>
<div class="g" style="left:383.4px;top:390px;height:19px"></div>
<div class="g" style="left:398.8px;top:390px;height:19px"></div>
<div class="g" style="left:414.2px;top:390px;height:19px"></div>
<div class="g" style="left:429.6px;top:390px;height:19px"></div>
<div class="g" style="left:445.0px;top:390px;height:19px"></div>
<div class="g" style="left:460.4px;top:390px;height:19px"></div>
<div class="g" style="left:475.8px;top:390px;height:19px"></div>
<div class="g" style="left:491.2px;top:390px;height:19px"></div>
<div class="g" style="left:506.6px;top:390px;height:19px"></div>
<div class="g" style="left:368.0px;top:409px;height:19px"></div>
<div class="g" style="left:383.4px;top:409px;height:19px"></div>
<div class="g" style="left:398.8px;top:409px;height:19px"></div>
<div class="g" style="left:414.2px;top:409px;height:19px"></div>
<div class="g" style="left:429.6px;top:409px;height:19px"></div>
<div class="g" style="left:445.0px;top:409px;height:19px"></div>
<div class="g" style="left:460.4px;top:409px;height:19px"></div>
<div class="g" style="left:475.8px;top:409px;height:19px"></div>
<div class="g" style="left:491.2px;top:409px;height:19px"></div>
<div class="g" style="left:506.6px;top:409px;height:19px"></div>
<div class="g" style="left:368.0px;top:428px;height:19px"></div>
<div class="g" style="left:383.4px;top:428px;height:19px"></div>
<div class="g" style="left:398.8px;top:428px;height:19px"></div>
<div class="g" style="left:414.2px;top:428px;height:19px"></div>
<div class="g" style="left:429.6px;top:428px;height:19px"></div>
<div class="g" style="left:445.0px;top:428px;height:19px"></div>
<div class="g" style="left:460.4px;top:428px;height:19px"></div>
<div class="g" style="left:475.8px;top:428px;height:19px"></div>
<div class="g" style="left:491.2px;top:428px;height:19px"></div>
<div class="g" style="left:368.0px;top:447px;height:19px"></div>
<div class="g" style="left:383.4px;top:447px;height:19px"></div>
<div class="g" style="left:398.8px;top:447px;height:19px"></div>
<div class="g" style="left:414.2px;top:447px;height:19px"></div>
<div class="g" style="left:429.6px;top:447px;height:19px"></div>
<div class="g" style="left:445.0px;top:447px;height:19px"></div>
<div class="g" style="left:460.4px;top:447px;height:19px"></div>
<div class="g" style="left:475.8px;top:447px;height:19px"></div>
<div class="g" style="left:491.2px;top:447px;height:19px"></div>
<div class="g" style="left:368.0px;top:466px;height:19px"></div>
<div class="g" style="left:383.4px;top:466px;height:19px"></div>
<div class="g" style="left:398.8px;top:466px;height:19px"></div>
<div class="g" style="left:414.2px;top:466px;height:19px"></div>
<div class="g" style="left:429.6px;top:466px;height:19px"></div>
<div class="g" style="left:445.0px;top:466px;height:19px"></div>
<div class="g" style="left:460.4px;top:466px;height:19px"></div>
<div class="g" style="left:475.8px;top:466px;height:19px"></div>
<div class="g" style="left:491.2px;top:466px;height:19px"></div>
<div class="g" style="left:506.6px;top:466px;height:19px"></div>
<div class="g" style="left:368.0px;top:485px;height:19px"></div>
<div class="g" style="left:383.4px;top:485px;height:19px"></div>
<div class="g" style="left:398.8px;top:485px;height:19px"></div>
<div class="g" style="left:414.2px;top:485px;height:19px"></div>
<div class="g" style="left:429.6px;top:485px;height:19px"></div>
<div class="g" style="left:445.0px;top:485px;height:19px"></div>
<div class="g" style="left:460.4px;top:485px;height:19px"></div>
<div class="g" style="left:475.8px;top:485px;height:19px"></div>
<div class="g" style="left:491.2px;top:485px;height:19px"></div>
<div class="g" style="left:506.6px;top:485px;height:19px"></div>
<div class="g" style="left:368.0px;top:504px;height:19px"></div>
<div class="g" style="left:383.4px;top:504px;height:19px"></div>
<div class="g" style="left:398.8px;top:504px;height:19px"></div>
<div class="g" style="left:414.2px;top:504px;height:19px"></div>
<div class="g" style="left:429.6px;top:504px;height:19px"></div>
<div class="g" style="left:445.0px;top:504px;height:19px"></div>
<div class="g" style="left:460.4px;top:504px;height:19px"></div>
<div class="g" style="left:475.8px;top:504px;height:19px"></div>
<div class="g" style="left:491.2px;top:504px;height:19px"></div>
<div class="g" style="left:506.6px;top:504px;height:19px"></div>
<div class="g" style="left:368.0px;top:523px;height:19px"></div>
<div class="g" style="left:383.4px;top:523px;height:19px"></div>
<div class="g" style="left:398.8px;top:523px;height:19px"></div>
<div class="g" style="left:414.2px;top:523px;height:19px"></div>
<div class="g" style="left:429.6px;top:523px;height:19px"></div>
<div class="g" style="left:445.0px;top:523px;height:19px"></div>
<div class="g" style="left:460.4px;top:523px;height:19px"></div>
<div class="g" style="left:475.8px;top:523px;height:19px"></div>
<div class="g" style="left:491.2px;top:523px;height:19px"></div>
<div class="g" style="left:506.6px;top:523px;height:19px"></div>
<div class="g" style="left:368.0px;top:542px;height:19px"></div>
<div class="g" style="left:383.4px;top:542px;height:19px"></div>
<div class="g" style="left:398.8px;top:542px;height:19px"></div>
<div class="g" style="left:414.2px;top:542px;height:19px"></div>
<div class="g" style="left:429.6px;top:542px;height:19px"></div>
<div class="g" style="left:445.0px;top:542px;height:19px"></div>
<div class="g" style="left:460.4px;top:542px;height:19px"></div>
<div class="g" style="left:475.8px;top:542px;height:19px"></div>
<div class="g" style="left:491.2px;top:542px;height:19px"></div>
<div class="g" style="left:506.6px;top:542px;height:19px"></div>
<div class="g" style="left:368.0px;top:561px;height:19px"></div>
<div class="g" style="left:383.4px;top:561px;height:19px"></div>
<div class="g" style="left:398.8px;top:561px;height:19px"></div>
<div class="g" style="left:414.2px;top:561px;height:19px"></div>
<div class="g" style="left:429.6px;top:561px;height:19px"></div>
<div class="g" style="left:445.0px;top:561px;height:19px"></div>
<div class="g" style="left:460.4px;top:561px;height:19px"></div>
<div class="g" style="left:475.8px;top:561px;height:19px"></div>
<div class="g" style="left:491.2px;top:561px;height:19px"></div>
<div class="g" style="left:368.0px;top:580px;height:19px"></div>
<div class="g" style="left:383.4px;top:580px;height:19px"></div>
<div class="g" style="left:398.8px;top:580px;height:19px"></div>
<div class="g" style="left:414.2px;top:580px;height:19px"></div>
<div class="g" style="left:429.6px;top:580px;height:19px"></div>
<div class="g" style="left:445.0px;top:580px;height:19px"></div>
<div class="g" style="left:460.4px;top:580px;height:19px"></div>
<div class="g" style="left:475.8px;top:580px;height:19px"></div>
<div class="g" style="left:368.0px;top:599px;height:19px"></div>
<div class="g" style="left:383.4px;top:599px;height:19px"></div>
<div class="g" style="left:398.8px;top:599px;height:19px"></div>
<div class="g" style="left:414.2px;top:599px;height:19px"></div>
<div class="g" style="left:429.6px;top:599px;height:19px"></div>
<div class="g" style="left:445.0px;top:599px;height:19px"></div>
<div class="g" style="left:460.4px;top:599px;height:19px"></div>
<div class="g" style="left:368.0px;top:618px;height:19px"></div>
<div class="g" style="left:383.4px;top:618px;height:19px"></div>
<div class="g" style="left:398.8px;top:618px;height:19px"></div>
<div class="g" style="left:414.2px;top:618px;height:19px"></div>
<div class="g" style="left:429.6px;top:618px;height:19px"></div>
<div class="g" style="left:445.0px;top:618px;height:19px"></div>
<div class="g" style="left:460.4px;top:618px;height:19px"></div>
<div class="g" style="left:368.0px;top:637px;height:19px"></div>
<div class="g" style="left:383.4px;top:637px;height:19px"></div>
<div class="g" style="left:398.8px;top:637px;height:19px"></div>
<div class="g" style="left:414.2px;top:637px;height:19px"></div>
<div class="g" style="left:429.6px;top:637px;height:19px"></div>
<div class="g" style="left:445.0px;top:637px;height:19px"></div>
<div class="g" style="left:460.4px;top:637px;height:19px"></div>
<div class="g" style="left:475.8px;top:637px;height:19px"></div>
<div class="g" style="left:368.0px;top:656px;height:19px"></div>
<div class="g" style="left:383.4px;top:656px;height:19px"></div>
<div class="g" style="left:398.8px;top:656px;height:19px"></div>
<div class="g" style="left:414.2px;top:656px;height:19px"></div>
<div class="g" style="left:429.6px;top:656px;height:19px"></div>
<div class="g" style="left:445.0px;top:656px;height:19px"></div>
<div class="g" style="left:460.4px;top:656px;height:19px"></div>
<div class="g" style="left:368.0px;top:675px;height:19px"></div>
<div class="g" style="left:383.4px;top:675px;height:19px"></div>
<div class="g" style="left:398.8px;top:675px;height:19px"></div>
<div class="g" style="left:414.2px;top:675px;height:19px"></div>
<div class="g" style="left:429.6px;top:675px;height:19px"></div>
<div class="g" style="left:445.0px;top:675px;height:19px"></div>
<div class="g" style="left:368.0px;top:694px;height:19px"></div>
<div class="g" style="left:383.4px;top:694px;height:19px"></div>
<div class="g" style="left:398.8px;top:694px;height:19px"></div>
<div class="g" style="left:414.2px;top:694px;height:19px"></div>
<div class="g" style="left:429.6px;top:694px;height:19px"></div>
<div class="g" style="left:445.0px;top:694px;height:19px"></div>
<div class="g" style="left:368.0px;top:713px;height:19px"></div>
<div class="g" style="left:383.4px;top:713px;height:19px"></div>
<div class="g" style="left:398.8px;top:713px;height:19px"></div>
<div class="g" style="left:414.2px;top:713px;height:19px"></div>
<div class="g" style="left:429.6px;top:713px;height:19px"></div>
<div class="g" style="left:445.0px;top:713px;height:19px"></div>
<div class="g" style="left:460.4px;top:713px;height:19px"></div>
<div class="g" style="left:368.0px;top:732px;height:19px"></div>
<div class="g" style="left:383.4px;top:732px;height:19px"></div>
<div class="g" style="left:398.8px;top:732px;height:19px"></div>
<div class="g" style="left:414.2px;top:732px;height:19px"></div>
<div class="g" style="left:429.6px;top:732px;height:19px"></div>
<div class="g" style="left:445.0px;top:732px;height:19px"></div>
<div class="g" style="left:460.4px;top:732px;height:19px"></div>
<div class="g" style="left:475.8px;top:732px;height:19px"></div>
<div class="g" style="left:368.0px;top:751px;height:19px"></div>
<div class="g" style="left:383.4px;top:751px;height:19px"></div>
<div class="g" style="left:398.8px;top:751px;height:19px"></div>
<div class="g" style="left:414.2px;top:751px;height:19px"></div>
<div class="g" style="left:429.6px;top:751px;height:19px"></div>
<div class="g" style="left:445.0px;top:751px;height:19px"></div>
<div class="g" style="left:460.4px;top:751px;height:19px"></div>
<div class="g" style="left:475.8px;top:751px;height:19px"></div>
<div class="g" style="left:491.2px;top:751px;height:19px"></div>
<div class="g" style="left:368.0px;top:770px;height:19px"></div>
<div class="g" style="left:383.4px;top:770px;height:19px"></div>
<div class="g" style="left:398.8px;top:770px;height:19px"></div>
<div class="g" style="left:414.2px;top:770px;height:19px"></div>
<div class="g" style="left:429.6px;top:770px;height:19px"></div>
<div class="g" style="left:445.0px;top:770px;height:19px"></div>
<div class="g" style="left:460.4px;top:770px;height:19px"></div>
<div class="g" style="left:475.8px;top:770px;height:19px"></div>
<div class="g" style="left:491.2px;top:770px;height:19px"></div>
<div class="g" style="left:368.0px;top:789px;height:19px"></div>
<div class="g" style="left:383.4px;top:789px;height:19px"></div>
<div class="g" style="left:398.8px;top:789px;height:19px"></div>
<div class="g" style="left:414.2px;top:789px;height:19px"></div>
<div class="g" style="left:429.6px;top:789px;height:19px"></div>
<div class="g" style="left:445.0px;top:789px;height:19px"></div>
<div class="g" style="left:460.4px;top:789px;height:19px"></div>
<div class="g" style="left:475.8px;top:789px;height:19px"></div>
<div class="g" style="left:491.2px;top:789px;height:19px"></div>
<div class="g" style="left:368.0px;top:808px;height:19px"></div>
<div class="g" style="left:383.4px;top:808px;height:19px"></div>
<div class="g" style="left:398.8px;top:808px;height:19px"></div>
<div class="g" style="left:414.2px;top:808px;height:19px"></div>
<div class="g" style="left:429.6px;top:808px;height:19px"></div>
<div class="g" style="left:445.0px;top:808px;height:19px"></div>
<div class="g" style="left:460.4px;top:808px;height:19px"></div>
<div class="g" style="left:475.8px;top:808px;height:19px"></div>
<div class="g" style="left:491.2px;top:808px;height:19px"></div>
<div class="ln" style="top:87px">20</div>
<div class="code" style="top:87px">        <span class="p">&lt;</span><span class="tg">div</span> <span class="a">className</span><span class="e">=</span><span class="s">&quot;container max-w-xl&quot;</span><span class="p">&gt;</span></div>
<div class="ln" style="top:106px">21</div>
<div class="code" style="top:106px">          <span class="p">&lt;</span><span class="tg">div</span></div>
<div class="ln" style="top:125px">22</div>
<div class="code" style="top:125px">            <span class="a">className</span><span class="e">=</span><span class="s">&quot;uc-navbar min-h-64px lg:min-h-80px text-gray-900 dark:text-white&quot;</span></div>
<div class="ln" style="top:144px">23</div>
<div class="code" style="top:144px">            <span class="a">data-uc-navbar</span><span class="e">=</span><span class="s">&quot;mode: click; animation: uc-animation-slide-top-small; duration: 150;&quot;</span></div>
<div class="ln" style="top:163px">24</div>
<div class="code" style="top:163px">          <span class="p">&gt;</span></div>
<div class="ln" style="top:182px">25</div>
<div class="code" style="top:182px">            <span class="p">&lt;</span><span class="tg">div</span> <span class="a">className</span><span class="e">=</span><span class="s">&quot;uc-navbar-left&quot;</span><span class="p">&gt;</span></div>
<div class="ln" style="top:201px">26</div>
<div class="code" style="top:201px">              <span class="p">&lt;</span><span class="tg">div</span> <span class="a">className</span><span class="e">=</span><span class="s">&quot;uc-logo text-dark dark:text-white&quot;</span><span class="p">&gt;</span></div>
<div class="ln" style="top:220px">27</div>
<div class="code" style="top:220px">                <span class="p">&lt;</span><span class="cp">Link</span></div>
<div class="ln" style="top:239px">28</div>
<div class="code" style="top:239px">                  <span class="a">className</span><span class="e">=</span><span class="s">&quot;panel text-none&quot;</span></div>
<div class="ln" style="top:258px">29</div>
<div class="code" style="top:258px">                  <span class="a">to</span><span class="e">=</span><span class="b1">{</span><span class="b1">`</span><span class="s">/</span><span class="b1">`</span><span class="b1">}</span></div>
<div class="ln" style="top:277px">30</div>
<div class="code" style="top:277px">                  <span class="a">style</span><span class="e">=</span><span class="b1">{</span><span class="b2">{</span><span class="w"> width</span><span class="e">:</span> <span class="n">140</span> <span class="b2">}</span><span class="b1">}</span></div>
<div class="ln" style="top:296px">31</div>
<div class="code" style="top:296px">                <span class="p">&gt;</span></div>
<div class="ln" style="top:315px">32</div>
<div class="code" style="top:315px">                  <span class="p">&lt;</span><span class="tg">img</span></div>
<div class="ln" style="top:334px">33</div>
<div class="code" style="top:334px">                    <span class="a">className</span><span class="e">=</span><span class="s">&quot;dark:d-none&quot;</span></div>
<div class="ln" style="top:353px">34</div>
<div class="code" style="top:353px">                    <span class="a">alt</span><span class="e">=</span><span class="s">&quot;Lexend&quot;</span></div>
<div class="ln" style="top:372px">35</div>
<div class="code" style="top:372px">                    <span class="a">src</span><span class="e">=</span><span class="s">&quot;/assets/images/common/logo-light.svg&quot;</span></div>
<div class="ln" style="top:391px">36</div>
<div class="code" style="top:391px">                    <span class="a">width</span><span class="e">=</span><span class="s">&quot;117&quot;</span></div>
<div class="ln" style="top:410px">37</div>
<div class="code" style="top:410px">                    <span class="a">height</span><span class="e">=</span><span class="s">&quot;40&quot;</span></div>
<div class="ln" style="top:429px">38</div>
<div class="code" style="top:429px">                  <span class="p">/&gt;</span></div>
<div class="ln" style="top:448px">39</div>
<div class="code" style="top:448px">                  <span class="p">&lt;</span><span class="tg">img</span></div>
<div class="ln" style="top:467px">40</div>
<div class="code" style="top:467px">                    <span class="a">className</span><span class="e">=</span><span class="s">&quot;d-none dark:d-block&quot;</span></div>
<div class="ln" style="top:486px">41</div>
<div class="code" style="top:486px">                    <span class="a">alt</span><span class="e">=</span><span class="s">&quot;Lexend&quot;</span></div>
<div class="ln" style="top:505px">42</div>
<div class="code" style="top:505px">                    <span class="a">src</span><span class="e">=</span><span class="s">&quot;/assets/images/common/logo-dark.svg&quot;</span></div>
<div class="ln" style="top:524px">43</div>
<div class="code" style="top:524px">                    <span class="a">width</span><span class="e">=</span><span class="s">&quot;117&quot;</span></div>
<div class="ln" style="top:543px">44</div>
<div class="code" style="top:543px">                    <span class="a">height</span><span class="e">=</span><span class="s">&quot;40&quot;</span></div>
<div class="ln" style="top:562px">45</div>
<div class="code" style="top:562px">                  <span class="p">/&gt;</span></div>
<div class="ln" style="top:581px">46</div>
<div class="code" style="top:581px">                <span class="p">&lt;/</span><span class="cp">Link</span><span class="p">&gt;</span></div>
<div class="ln" style="top:600px">47</div>
<div class="code" style="top:600px">              <span class="p">&lt;/</span><span class="tg">div</span><span class="p">&gt;</span></div>
<div class="ln" style="top:619px">48</div>
<div class="code" style="top:619px">              <span class="p">&lt;</span><span class="tg">ul</span> <span class="a">className</span><span class="e">=</span><span class="s">&quot;uc-navbar-nav gap-3 xl:gap-4 d-none lg:d-flex fw-medium ms-2&quot;</span><span class="p">&gt;</span></div>
<div class="ln" style="top:638px">49</div>
<div class="code" style="top:638px">                <span class="p">&lt;</span><span class="cp">Nav</span> <span class="p">/&gt;</span></div>
<div class="ln" style="top:657px">50</div>
<div class="code" style="top:657px">              <span class="p">&lt;/</span><span class="tg">ul</span><span class="p">&gt;</span></div>
<div class="ln" style="top:676px">51</div>
<div class="code" style="top:676px">            <span class="p">&lt;/</span><span class="tg">div</span><span class="p">&gt;</span></div>
<div class="ln" style="top:695px">52</div>
<div class="code" style="top:695px">            <span class="p">&lt;</span><span class="tg">div</span> <span class="a">className</span><span class="e">=</span><span class="s">&quot;uc-navbar-right&quot;</span><span class="p">&gt;</span></div>
<div class="ln" style="top:714px">53</div>
<div class="code" style="top:714px">              <span class="p">&lt;</span><span class="tg">div</span> <span class="a">className</span><span class="e">=</span><span class="s">&quot;d-none xl:d-block&quot;</span><span class="p">&gt;</span></div>
<div class="ln" style="top:733px">54</div>
<div class="code" style="top:733px">                <span class="p">&lt;</span><span class="tg">a</span></div>
<div class="ln" style="top:752px">55</div>
<div class="code" style="top:752px">                  <span class="a">className</span><span class="e">=</span><span class="s">&quot;text-none fw-medium&quot;</span></div>
<div class="ln" style="top:771px">56</div>
<div class="code" style="top:771px">                  <span class="a">onClick</span><span class="e">=</span><span class="b1">{</span><span class="v">openContactModal</span><span class="b1">}</span></div>
<div class="ln" style="top:790px">57</div>
<div class="code" style="top:790px">                  <span class="a">data-uc-toggle</span><span class="e">=</span><span class="s">&quot;&quot;</span></div>
<div class="ln" style="top:809px">58</div>
<div class="code" style="top:809px">                  <span class="a">role</span><span class="e">=</span><span class="s">&quot;button&quot;</span></div>
<div class="abs" style="left:488px;top:310px;width:478px;height:272px;border:3px solid #fb0007;border-radius:2px"></div>
<div class="abs" style="left:300px;top:53px;width:1299px;height:22px;background:#122033"></div>
<span class="t" style="left:315.6px;top:55.5px;font:normal 400 13px/18px 'Liberation Sans',sans-serif;color:#b4bfd0;transform:scaleX(0.9571);">src</span>
<svg class="i" style="left:336.6px;top:59px" width="8" height="12" viewBox="0 0 8 12" fill="none" stroke="#b4bfd0" stroke-width="1.2"><path d="M1.5 1.3 L6.5 6 L1.5 10.7"/></svg>
<span class="t" style="left:347.8px;top:55.5px;font:normal 400 13px/18px 'Liberation Sans',sans-serif;color:#b4bfd0;transform:scaleX(1.0109);">components</span>
<svg class="i" style="left:423.8px;top:59px" width="8" height="12" viewBox="0 0 8 12" fill="none" stroke="#b4bfd0" stroke-width="1.2"><path d="M1.5 1.3 L6.5 6 L1.5 10.7"/></svg>
<span class="t" style="left:435.3px;top:55.5px;font:normal 400 13px/18px 'Liberation Sans',sans-serif;color:#b4bfd0;transform:scaleX(0.9642);">headers</span>
<svg class="i" style="left:485.3px;top:59px" width="8" height="12" viewBox="0 0 8 12" fill="none" stroke="#b4bfd0" stroke-width="1.2"><path d="M1.5 1.3 L6.5 6 L1.5 10.7"/></svg>
<svg class="i" style="left:500.2px;top:58px" width="13" height="13" viewBox="-10 -10 20 20" fill="none" stroke="#4da3dc" stroke-width="1.05"><ellipse rx="3.5" ry="9.2"/><ellipse rx="9.2" ry="3.5" transform="rotate(30)"/><ellipse rx="9.2" ry="3.5" transform="rotate(-30)"/><circle r="1.2" fill="#4da3dc" stroke="none"/></svg>
<span class="t" style="left:518.75px;top:55.5px;font:normal 400 13px/18px 'Liberation Sans',sans-serif;color:#b4bfd0;transform:scaleX(0.9550);">Header1.jsx</span>
<svg class="i" style="left:589.3px;top:59px" width="8" height="12" viewBox="0 0 8 12" fill="none" stroke="#b4bfd0" stroke-width="1.2"><path d="M1.5 1.3 L6.5 6 L1.5 10.7"/></svg>
<span class="t" style="left:601px;top:55.5px;font:normal 400 13px/18px 'Liberation Sans',sans-serif;color:#b4bfd0;transform:scaleX(0.7308);">…</span>
<div class="abs" style="left:300px;top:94px;width:1166px;height:5px;background:linear-gradient(rgba(0,0,0,.5),rgba(0,0,0,.18) 45%,rgba(0,0,0,0))"></div>
<div class="abs" style="left:300px;top:75px;width:1166px;height:19px;background:#122033"></div>
<div class="ln" style="top:76.5px">8</div>
<div class="code" style="top:76.5px"><span class="k">export</span> <span class="k">default</span> <span class="f">function</span> <span class="tg">Header1</span><span class="w">()</span> <span class="b1">{</span></div>
<div class="abs mm" style="left:1474px;top:75px;width:112px;height:200px;overflow:hidden"><span class="k">import</span> <span class="v">Nav</span> <span class="k">from</span> <span class="s">&quot;./component/Nav&quot;</span><span class="e">;</span>
<span class="k">import</span> <span class="v">{ Link }</span> <span class="k">from</span> <span class="s">&quot;react-router-dom&quot;</span><span class="e">;</span>

<span class="k">import</span> <span class="v">{ openMobileMenu }</span> <span class="k">from</span> <span class="s">&quot;@/utlis/toggleMobileMenu&quot;</span><span class="e">;</span>
<span class="k">import</span> <span class="v">{ openContactModal }</span> <span class="k">from</span> <span class="s">&quot;@/utlis/toggleContactModal&quot;</span><span class="e">;</span>
<span class="k">import</span> <span class="v">LanguageSelect</span> <span class="k">from</span> <span class="s">&quot;../common/LanguageSelect&quot;</span><span class="e">;</span>

<span class="k">export</span> <span class="k">default</span> <span class="f">function</span> <span class="tg">Header1</span><span class="w">()</span> <span class="b1">{</span>
  <span class="k">return</span> <span class="w">(</span>
    <span class="p">&lt;</span><span class="tg">header</span>
      <span class="a">style</span><span class="e">=</span><span class="b1">{</span><span class="b2">{</span> <span class="s">&quot;--uc-nav-height&quot;</span><span class="e">:</span> <span class="s">&quot;80px&quot;</span> <span class="b2">}</span><span class="b1">}</span>
      <span class="a">className</span><span class="e">=</span><span class="s">&quot;uc-header header-default uc-navbar-sticky-wrap z-999 uc-dark dark-mode&quot;</span>
      <span class="a">data-uc-sticky</span><span class="e">=</span><span class="s">&quot;sel-target: .uc-navbar-container; cls-active: uc-navbar-sticky; cls-inactive: uc-navbar-transparent;&quot;</span>
    <span class="p">&gt;</span>
      <span class="p">&lt;</span><span class="tg">nav</span>
        <span class="a">className</span><span class="e">=</span><span class="s">&quot;uc-navbar-container text-gray-900 dark:text-white fs-6 z-1 uc-navbar-float&quot;</span>
        <span class="a">data-anime</span><span class="e">=</span><span class="s">&quot;translateY: [-40, 0]; opacity: [0, 1]; easing: easeOutExpo; duration: 750; delay: 0;&quot;</span>
        <span class="a">style</span><span class="e">=</span><span class="b1">{</span><span class="b2">{</span><span class="w"> transform</span><span class="e">:</span> <span class="s">&quot;translateY(0px)&quot;</span><span class="e">,</span><span class="w"> opacity</span><span class="e">:</span> <span class="n">1</span> <span class="b2">}</span><span class="b1">}</span>
      <span class="p">&gt;</span>
        <span class="p">&lt;</span><span class="tg">div</span> <span class="a">className</span><span class="e">=</span><span class="s">&quot;container max-w-xl&quot;</span><span class="p">&gt;</span>
          <span class="p">&lt;</span><span class="tg">div</span>
            <span class="a">className</span><span class="e">=</span><span class="s">&quot;uc-navbar min-h-64px lg:min-h-80px text-gray-900 dark:text-white&quot;</span>
            <span class="a">data-uc-navbar</span><span class="e">=</span><span class="s">&quot;mode: click; animation: uc-animation-slide-top-small; duration: 150;&quot;</span>
          <span class="p">&gt;</span>
            <span class="p">&lt;</span><span class="tg">div</span> <span class="a">className</span><span class="e">=</span><span class="s">&quot;uc-navbar-left&quot;</span><span class="p">&gt;</span>
              <span class="p">&lt;</span><span class="tg">div</span> <span class="a">className</span><span class="e">=</span><span class="s">&quot;uc-logo text-dark dark:text-white&quot;</span><span class="p">&gt;</span>
                <span class="p">&lt;</span><span class="cp">Link</span>
                  <span class="a">className</span><span class="e">=</span><span class="s">&quot;panel text-none&quot;</span>
                  <span class="a">to</span><span class="e">=</span><span class="b1">{</span><span class="b1">`</span><span class="s">/</span><span class="b1">`</span><span class="b1">}</span>
                  <span class="a">style</span><span class="e">=</span><span class="b1">{</span><span class="b2">{</span><span class="w"> width</span><span class="e">:</span> <span class="n">140</span> <span class="b2">}</span><span class="b1">}</span>
                <span class="p">&gt;</span>
                  <span class="p">&lt;</span><span class="tg">img</span>
                    <span class="a">className</span><span class="e">=</span><span class="s">&quot;dark:d-none&quot;</span>
                    <span class="a">alt</span><span class="e">=</span><span class="s">&quot;Lexend&quot;</span>
                    <span class="a">src</span><span class="e">=</span><span class="s">&quot;/assets/images/common/logo-light.svg&quot;</span>
                    <span class="a">width</span><span class="e">=</span><span class="s">&quot;117&quot;</span>
                    <span class="a">height</span><span class="e">=</span><span class="s">&quot;40&quot;</span>
                  <span class="p">/&gt;</span>
                  <span class="p">&lt;</span><span class="tg">img</span>
                    <span class="a">className</span><span class="e">=</span><span class="s">&quot;d-none dark:d-block&quot;</span>
                    <span class="a">alt</span><span class="e">=</span><span class="s">&quot;Lexend&quot;</span>
                    <span class="a">src</span><span class="e">=</span><span class="s">&quot;/assets/images/common/logo-dark.svg&quot;</span>
                    <span class="a">width</span><span class="e">=</span><span class="s">&quot;117&quot;</span>
                    <span class="a">height</span><span class="e">=</span><span class="s">&quot;40&quot;</span>
                  <span class="p">/&gt;</span>
                <span class="p">&lt;/</span><span class="cp">Link</span><span class="p">&gt;</span>
              <span class="p">&lt;/</span><span class="tg">div</span><span class="p">&gt;</span>
              <span class="p">&lt;</span><span class="tg">ul</span> <span class="a">className</span><span class="e">=</span><span class="s">&quot;uc-navbar-nav gap-3 xl:gap-4 d-none lg:d-flex fw-medium ms-2&quot;</span><span class="p">&gt;</span>
                <span class="p">&lt;</span><span class="cp">Nav</span> <span class="p">/&gt;</span>
              <span class="p">&lt;/</span><span class="tg">ul</span><span class="p">&gt;</span>
            <span class="p">&lt;/</span><span class="tg">div</span><span class="p">&gt;</span>
            <span class="p">&lt;</span><span class="tg">div</span> <span class="a">className</span><span class="e">=</span><span class="s">&quot;uc-navbar-right&quot;</span><span class="p">&gt;</span>
              <span class="p">&lt;</span><span class="tg">div</span> <span class="a">className</span><span class="e">=</span><span class="s">&quot;d-none xl:d-block&quot;</span><span class="p">&gt;</span>
                <span class="p">&lt;</span><span class="tg">a</span>
                  <span class="a">className</span><span class="e">=</span><span class="s">&quot;text-none fw-medium&quot;</span>
                  <span class="a">onClick</span><span class="e">=</span><span class="b1">{</span><span class="v">openContactModal</span><span class="b1">}</span>
                  <span class="a">data-uc-toggle</span><span class="e">=</span><span class="s">&quot;&quot;</span>
                  <span class="a">role</span><span class="e">=</span><span class="s">&quot;button&quot;</span>
                <span class="p">&gt;</span>
                  <span class="p">&lt;</span><span class="tg">span</span><span class="p">&gt;</span><span class="w">Connect &amp; Build</span><span class="p">&lt;/</span><span class="tg">span</span><span class="p">&gt;</span>
                <span class="p">&lt;/</span><span class="tg">a</span><span class="p">&gt;</span>
              <span class="p">&lt;/</span><span class="tg">div</span><span class="p">&gt;</span>
              <span class="p">&lt;</span><span class="tg">div</span> <span class="a">className</span><span class="e">=</span><span class="s">&quot;d-none xl:d-block&quot;</span><span class="p">&gt;</span>
                <span class="p">&lt;</span><span class="tg">a</span> <span class="a">className</span><span class="e">=</span><span class="s">&quot;btn btn-md btn-primary&quot;</span> <span class="a">href</span><span class="e">=</span><span class="s">&quot;#contact&quot;</span><span class="p">&gt;</span>
                     <span class="w">Get started now</span>
                <span class="p">&lt;/</span><span class="tg">a</span><span class="p">&gt;</span>
              <span class="p">&lt;/</span><span class="tg">div</span><span class="p">&gt;</span>
              <span class="p">&lt;</span><span class="tg">a</span>
                <span class="a">className</span><span class="e">=</span><span class="s">&quot;d-block lg:d-none uc-icon uc-navbar-toggle-icon text-dark dark:text-white&quot;</span>
                <span class="a">href</span><span class="e">=</span><span class="s">&quot;#uc-menu-panel&quot;</span>
              <span class="p">&gt;</span>
                <span class="w">Open menu bar</span>
              <span class="p">&lt;/</span><span class="tg">a</span><span class="p">&gt;</span>
              <span class="p">&lt;</span><span class="tg">a</span> <span class="a">data-uc-toggle</span>
              <span class="p">&gt;</span>
                <span class="a">className</span><span class="e">=</span><span class="s">&quot;uc-menu-trigger icon-2 d-lg-none text-dark dark:text-white&quot;</span>
                <span class="a">onClick</span><span class="e">=</span><span class="b1">{</span><span class="v">openMobileMenu</span><span class="b1">}</span>
              <span class="p">&gt;</span>
                <span class="p">&lt;</span><span class="tg">svg</span> <span class="a">width</span><span class="e">=</span><span class="n">&quot;20&quot;</span> <span class="a">height</span><span class="e">=</span><span class="n">&quot;20&quot;</span> <span class="a">viewBox</span><span class="e">=</span><span class="s">&quot;0 0 24 24&quot;</span>
                  <span class="p">&lt;</span><span class="tg">path</span>
                    <span class="a">strokeLinecapJoinedRound</span>
                      <span class="w">d=</span>
                         <span class="s">&quot;M3 6h18v2H3V6zm0 5h18v2H3v-2z M12 2C6.48 2 2 6.48 2 12s4.48 10 10 10 10-4.48 10-10</span>
                    <span class="p">/&gt;</span>
                  <span class="p">&gt;</span>
                  <span class="p">&lt;</span><span class="tg">rect</span> <span class="a">className</span><span class="e">=</span><span class="s">&quot;line-1&quot;</span> <span class="a">x</span><span class="e">=</span><span class="n">&quot;0&quot;</span> <span class="a">y</span><span class="e">=</span><span class="n">&quot;3&quot;</span> <span class="a">width</span><span class="e">=</span><span class="n">&quot;24&quot;</span> <span class="a">height</span><span class="e">=</span><span class="n">&quot;2&quot;</span> <span class="p">/&gt;</span>
                  <span class="p">&lt;</span><span class="tg">rect</span> <span class="a">className</span><span class="e">=</span><span class="s">&quot;line-1&quot;</span> <span class="a">x</span><span class="e">=</span><span class="n">&quot;0&quot;</span> <span class="a">y</span><span class="e">=</span><span class="n">&quot;3&quot;</span> <span class="a">width</span><span class="e">=</span><span class="n">&quot;24&quot;</span> <span class="a">height</span><span class="e">=</span><span class="n">&quot;2&quot;</span> <span class="p">/&gt;</span>
                  <span class="p">&lt;</span><span class="tg">rect</span> <span class="a">className</span><span class="e">=</span><span class="s">&quot;line-1&quot;</span> <span class="a">x</span><span class="e">=</span><span class="n">&quot;0&quot;</span> <span class="a">y</span><span class="e">=</span><span class="n">&quot;3&quot;</span> <span class="a">width</span><span class="e">=</span><span class="n">&quot;24&quot;</span> <span class="a">height</span><span class="e">=</span><span class="n">&quot;2&quot;</span> <span class="p">/&gt;</span>
                  <span class="p">&lt;</span><span class="tg">rect</span> <span class="a">className</span><span class="e">=</span><span class="s">&quot;line-1&quot;</span> <span class="a">x</span><span class="e">=</span><span class="n">&quot;0&quot;</span> <span class="a">y</span><span class="e">=</span><span class="n">&quot;3&quot;</span> <span class="a">width</span><span class="e">=</span><span class="n">&quot;24&quot;</span> <span class="a">height</span><span class="e">=</span><span class="n">&quot;2&quot;</span> <span class="p">/&gt;</span>
                <span class="p">&lt;/</span><span class="tg">svg</span><span class="p">&gt;</span>
              <span class="p">&lt;/</span><span class="tg">a</span><span class="p">&gt;</span>
            <span class="p">&lt;/</span><span class="tg">div</span><span class="p">&gt;</span>
          <span class="p">&lt;/</span><span class="tg">div</span><span class="p">&gt;</span>
        <span class="p">&lt;/</span><span class="tg">div</span><span class="p">&gt;</span>
      <span class="p">&lt;/</span><span class="tg">nav</span><span class="p">&gt;</span>
    <span class="p">&lt;/</span><span class="tg">header</span><span class="p">&gt;</span>
  <span class="w">);</span>
<span class="b1">}</span></div>
<div class="abs" style="left:1465px;top:75px;width:2px;height:746px;background:linear-gradient(90deg,rgba(0,0,0,.05),rgba(0,0,0,.22))"></div>
<div class="abs" style="left:1586px;top:175px;width:13px;height:213px;background:#334155"></div>
<div class="abs" style="left:1586px;top:75px;width:1px;height:746px;background:#1a2940"></div>
<div class="abs" style="left:1587px;top:75px;width:12px;height:2px;background:#c9a227"></div>
<span class="t" style="left:1295px;top:756px;font:normal 400 20px/28px 'Liberation Sans',sans-serif;color:#8b93a1;transform:scaleX(0.9915);">Activate Windows</span>
<span class="t" style="left:1295px;top:781.5px;font:normal 400 15px/21px 'Liberation Sans',sans-serif;color:#8b93a1;transform:scaleX(0.9925);">Go to Settings to activate Windows.</span>
<div class="abs" style="left:0;top:821px;width:1599px;height:22px;background:#101b2b;border-top:1px solid #0c1422"></div>
<div class="abs" style="left:0;top:821px;width:34px;height:22px;background:#9ca3be"></div>
<svg class="i" style="left:0;top:821px" width="34" height="14" viewBox="0 821 34 14" fill="none" stroke="#3d415f" stroke-width="1.2"><path d="M21.4 826.2 L17.2 830.3 L21 834 M12.8 829.4 L17 833.6"/></svg>
<svg class="i" style="left:40px;top:824px" width="14" height="14" viewBox="40 824 14 14" fill="none" stroke="#1ba5b8" stroke-width="1.2"><circle cx="44" cy="827.4" r="1.9"/><circle cx="50" cy="830" r="1.9"/><path d="M44 829.4 V838"/></svg>
<span class="t" style="left:58px;top:824.5px;font:normal 400 12px/17px 'Liberation Sans',sans-serif;color:#1ba5b8;transform:scaleX(1.0378);">main</span>
<svg class="i" style="left:90px;top:826px" width="16" height="10" viewBox="0 0 16 10" fill="none" stroke="#1ba5b8" stroke-width="1.3"><path d="M2 8 a6 6 0 0 1 11 -3"/></svg>
<svg class="i" style="left:117px;top:825px" width="14" height="14" viewBox="0 0 14 14" fill="none" stroke="#1ba5b8" stroke-width="1.2"><circle cx="7" cy="7" r="6"/><path d="M4.5 4.5 L9.5 9.5"/></svg>
<span class="t" style="left:134px;top:825px;font:normal 400 12px/17px 'Liberation Sans',sans-serif;color:#1ba5b8;transform:scaleX(0.9720);">0</span>
<svg class="i" style="left:146px;top:826px" width="12" height="12" viewBox="0 0 12 12" fill="none" stroke="#1ba5b8" stroke-width="1.2"><path d="M6 1 L11.5 12 H.5 Z"/></svg>
<span class="t" style="left:161px;top:825px;font:normal 400 12px/17px 'Liberation Sans',sans-serif;color:#1ba5b8;transform:scaleX(0.9720);">0</span>
<svg class="i" style="left:185px;top:826px" width="12" height="12" viewBox="0 0 12 12" fill="none" stroke="#1ba5b8" stroke-width="1.2"><path d="M2 1 V12 M10 1 V12 M5 2 V10 M7 2 V10"/></svg>
<span class="t" style="left:201px;top:825px;font:normal 400 12px/17px 'Liberation Sans',sans-serif;color:#1ba5b8;transform:scaleX(0.9720);">0</span>
<span class="t" style="left:1254px;top:825.5px;font:normal 400 12px/17px 'Liberation Sans',sans-serif;color:#1ba5b8;transform:scaleX(0.9647);">Ln 1, Col 1</span>
<span class="t" style="left:1325px;top:825.5px;font:normal 400 12px/17px 'Liberation Sans',sans-serif;color:#1ba5b8;transform:scaleX(0.9368);">Spaces: 2</span>
<span class="t" style="left:1390px;top:825.5px;font:normal 400 12px/17px 'Liberation Sans',sans-serif;color:#1ba5b8;transform:scaleX(0.9412);">UTF-8</span>
<span class="t" style="left:1438px;top:825.5px;font:normal 400 12px/17px 'Liberation Sans',sans-serif;color:#1ba5b8;transform:scaleX(0.8562);">LF</span>
<span class="t" style="left:1464.5px;top:825.5px;font:normal 400 12px/17px 'Liberation Sans',sans-serif;color:#1ba5b8;transform:scaleX(1.1004);">{ }</span>
<span class="t" style="left:1484px;top:825.5px;font:normal 400 12px/17px 'Liberation Sans',sans-serif;color:#1ba5b8;transform:scaleX(0.9094);">JavaScript JSX</span>
<svg class="i" style="left:1572px;top:825px" width="12" height="12" viewBox="0 0 12 12" fill="none" stroke="#1ba5b8" stroke-width="1.2"><path d="M2 10 V6 a4 4 0 0 1 8 0 V10"/></svg>
</div></body></html>
